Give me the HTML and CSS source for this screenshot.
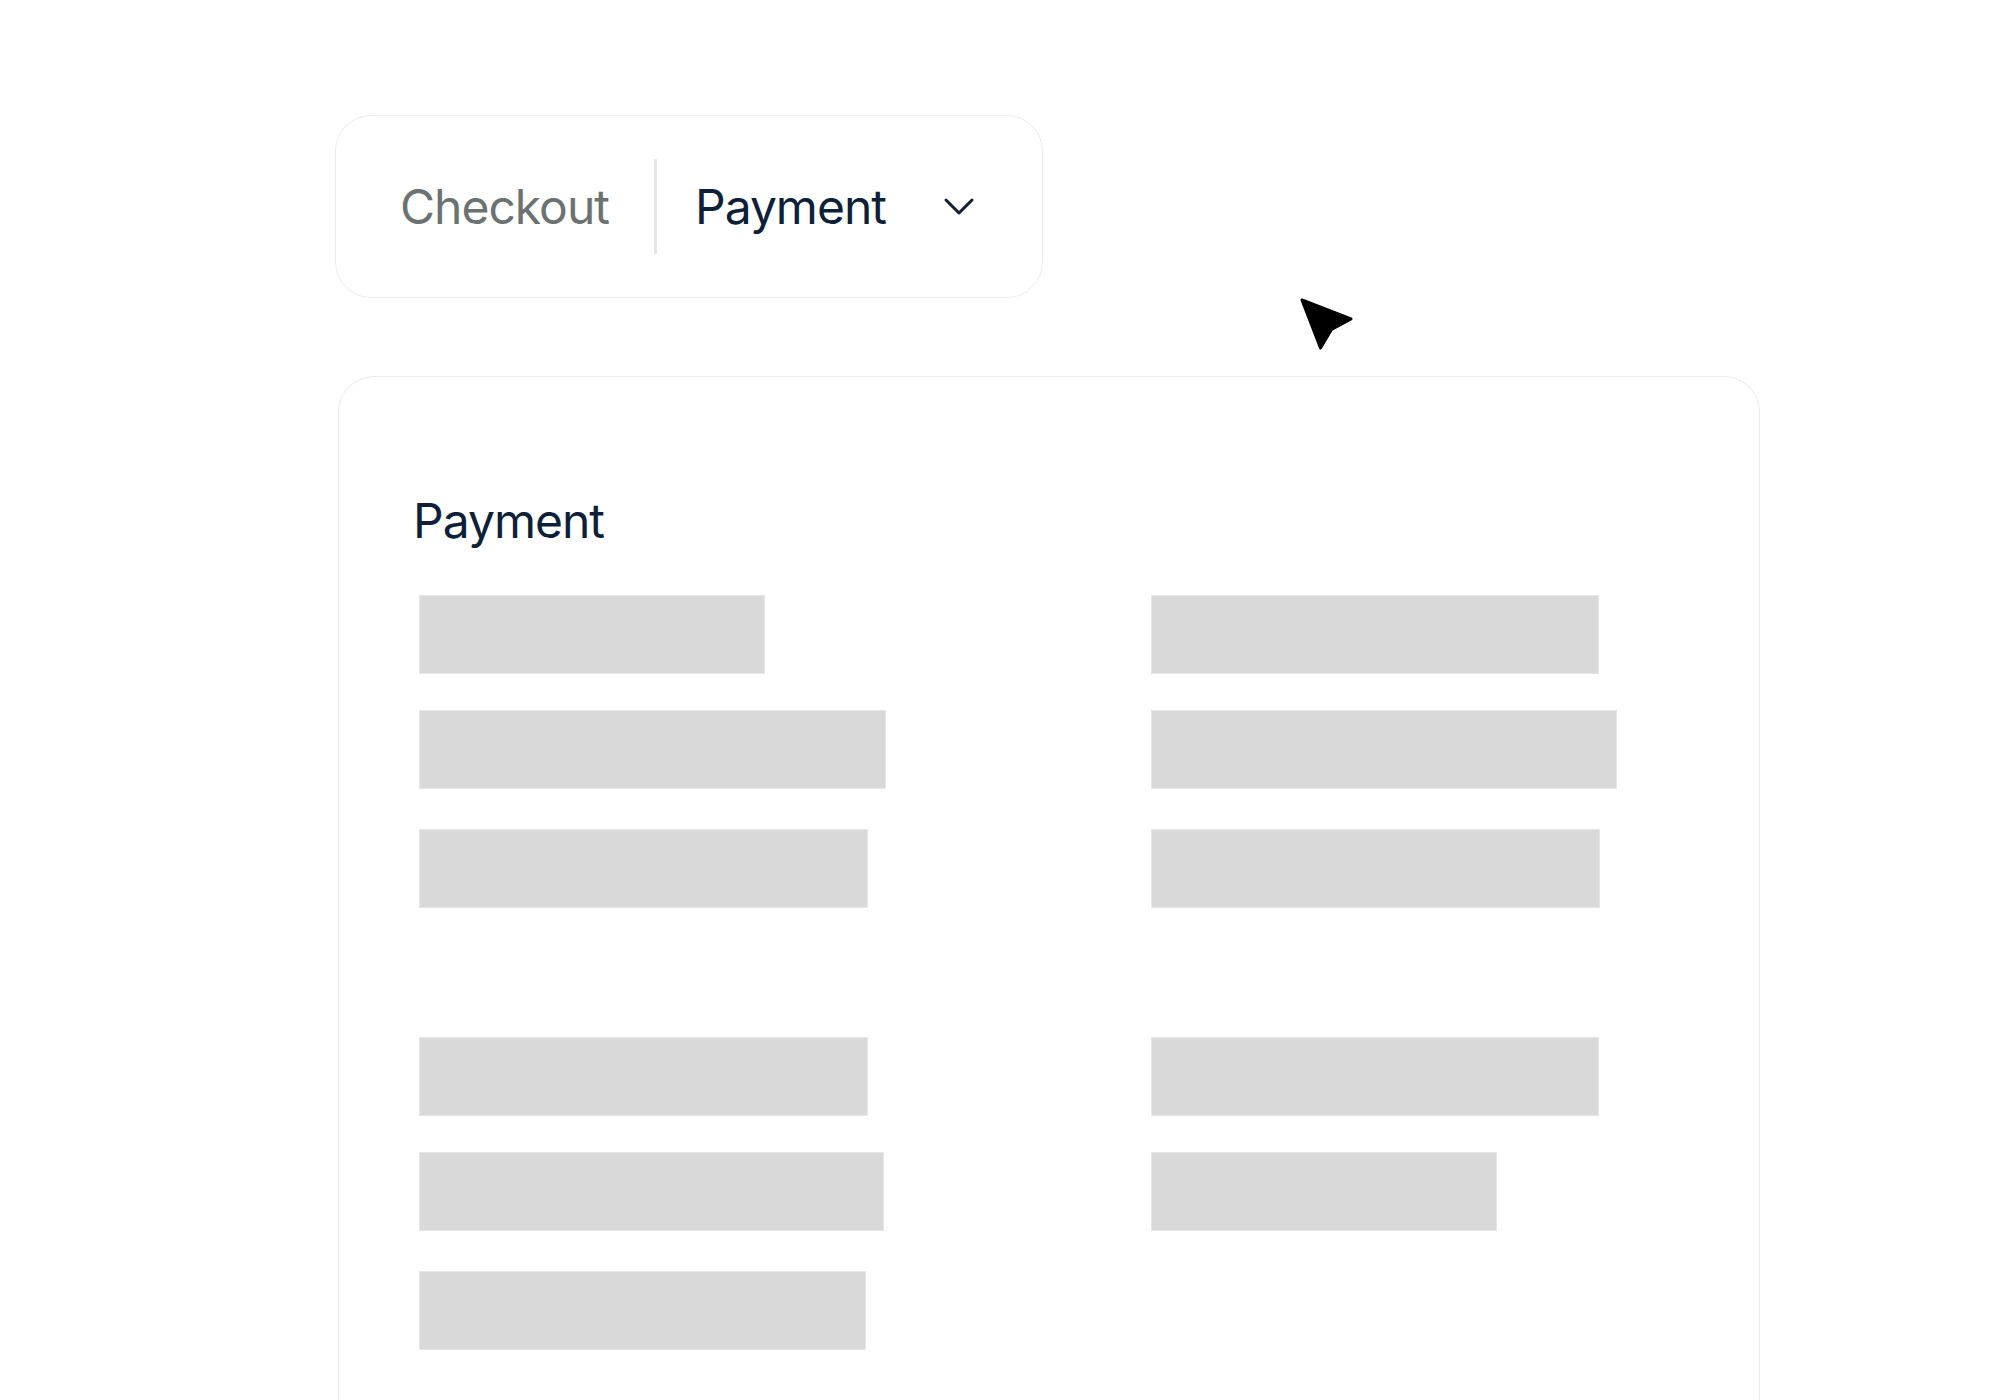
FILE: index.html
```html
<!DOCTYPE html>
<html lang="en">
<head>
    <meta charset="UTF-8">
    <meta name="viewport" content="width=device-width, initial-scale=1.0">
    <title>Checkout - Payment</title>
    <link rel="stylesheet" href="styles.css">
</head>
<body>
    <div class="page">
        <nav class="crumbs">
            <span class="crumb-prev">Checkout</span>
            <span class="crumb-sep"></span>
            <span class="crumb-current">Payment</span>
            <svg class="chevron" viewBox="0 0 32 20" width="32" height="20">
                <path d="M3 3 L16 16 L29 3" fill="none" stroke="#0e1f38" stroke-width="3" stroke-linecap="round" stroke-linejoin="round"/>
            </svg>
        </nav>

        <section class="panel">
            <h2 class="panel-title">Payment</h2>
            <div class="fields">
                <div class="bar" style="width: 346px"></div>
                <div class="bar" style="width: 448px"></div>
                <div class="bar" style="width: 467px"></div>
                <div class="bar" style="width: 466px"></div>
                <div class="bar" style="width: 449px"></div>
                <div class="bar" style="width: 449px"></div>
            </div>
            <div class="fields group">
                <div class="bar" style="width: 449px"></div>
                <div class="bar" style="width: 448px"></div>
                <div class="bar" style="width: 465px"></div>
                <div class="bar" style="width: 346px"></div>
                <div class="bar" style="width: 447px"></div>
            </div>
        </section>
    </div>

    <!-- pointer -->
    <svg class="pointer" viewBox="0 0 62 60" width="62" height="60">
        <path d="M7 6 L56 25 L36.5 35.5 L25.5 54 Z" fill="#000" stroke="#000" stroke-width="3" stroke-linejoin="round"/>
    </svg>
</body>
</html>
```

FILE: styles.css
```css
body {
    font-family: Inter, "Noto Sans", sans-serif;
    margin: 0;
    padding: 0;
    background-color: #fff;
    height: 1400px;
    overflow: hidden;
}

.page {
    padding: 115px 0 0 335px;
}

.crumbs {
    display: flex;
    align-items: center;
    box-sizing: border-box;
    width: 708px;
    height: 183px;
    padding-left: 64px;
    border: 1px solid #ececec;
    border-radius: 36px;
    font-size: 48px;
    letter-spacing: -1px;
}

.crumb-prev {
    color: #6b7271;
}

.crumb-sep {
    width: 3px;
    height: 95px;
    margin: 0 38px 0 45px;
    background: #e6e6e6;
}

.crumb-current {
    color: #0e1f38;
}

.chevron {
    margin-left: 57px;
}

.panel {
    box-sizing: border-box;
    width: 1422px;
    height: 1100px;
    margin: 78px 0 0 3px;
    padding: 114px 0 0 80px;
    border: 1px solid #ececec;
    border-bottom: none;
    border-radius: 36px 36px 0 0;
}

.panel-title {
    margin: 0 0 45px -6px;
    font-size: 48px;
    font-weight: 400;
    letter-spacing: -1px;
    color: #0e1f38;
}

.fields {
    display: grid;
    grid-template-columns: 732px 1fr;
    row-gap: 36px;
}

/* third row sits a little lower */
.fields .bar:nth-child(n+5) {
    margin-top: 4px;
}

.fields.group {
    margin-top: 129px;
}

.bar {
    box-sizing: border-box;
    height: 79px;
    background: #d9d9d9;
    border: 1px solid #e6e6e6;
}

.pointer {
    position: absolute;
    left: 1295px;
    top: 294px;
}
```
